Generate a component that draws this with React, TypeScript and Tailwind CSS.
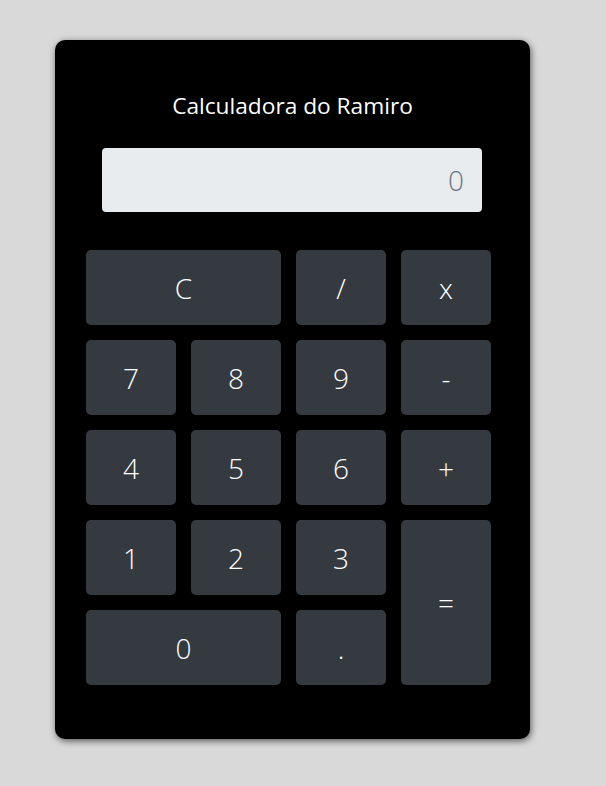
import React from "react";

const btn =
  "flex items-center justify-center rounded-[5px] bg-[#343a40] text-white text-[28px] font-light";

export default function App() {
  return (
    <div className="min-h-[786px] w-[606px] bg-[#d9d9d9] pt-[40px] pl-[55px]" style={{ fontFamily: '"Open Sans", "Noto Sans", sans-serif' }}>
      <div className="w-[475px] h-[699px] rounded-[10px] bg-black shadow-[1px_2px_7px_rgba(0,0,0,0.6)] flex flex-col">
        <div className="mt-[50px] h-[32px] flex items-center justify-center text-white text-[22.7px] leading-[32px]">
          Calculadora do Ramiro
        </div>
        <div className="mt-[26px] ml-[47px] w-[380px] h-[64px] rounded-[4px] bg-[#e9ecef] flex items-center justify-end pr-[18px] text-[28px] font-light text-[#6c757d]">
          0
        </div>
        <div className="mt-[38px] ml-[31px] w-[405px] grid grid-cols-[90px_90px_90px_90px] grid-rows-[75px_75px_75px_75px_75px] gap-[15px]">
          <div className={btn + " col-span-2"}>C</div>
          <div className={btn}>/</div>
          <div className={btn}>x</div>
          <div className={btn}>7</div>
          <div className={btn}>8</div>
          <div className={btn}>9</div>
          <div className={btn}>-</div>
          <div className={btn}>4</div>
          <div className={btn}>5</div>
          <div className={btn}>6</div>
          <div className={btn}>+</div>
          <div className={btn}>1</div>
          <div className={btn}>2</div>
          <div className={btn}>3</div>
          <div className={btn + " row-span-2"}>=</div>
          <div className={btn + " col-span-2"}>0</div>
          <div className={btn}>.</div>
        </div>
      </div>
    </div>
  );
}
